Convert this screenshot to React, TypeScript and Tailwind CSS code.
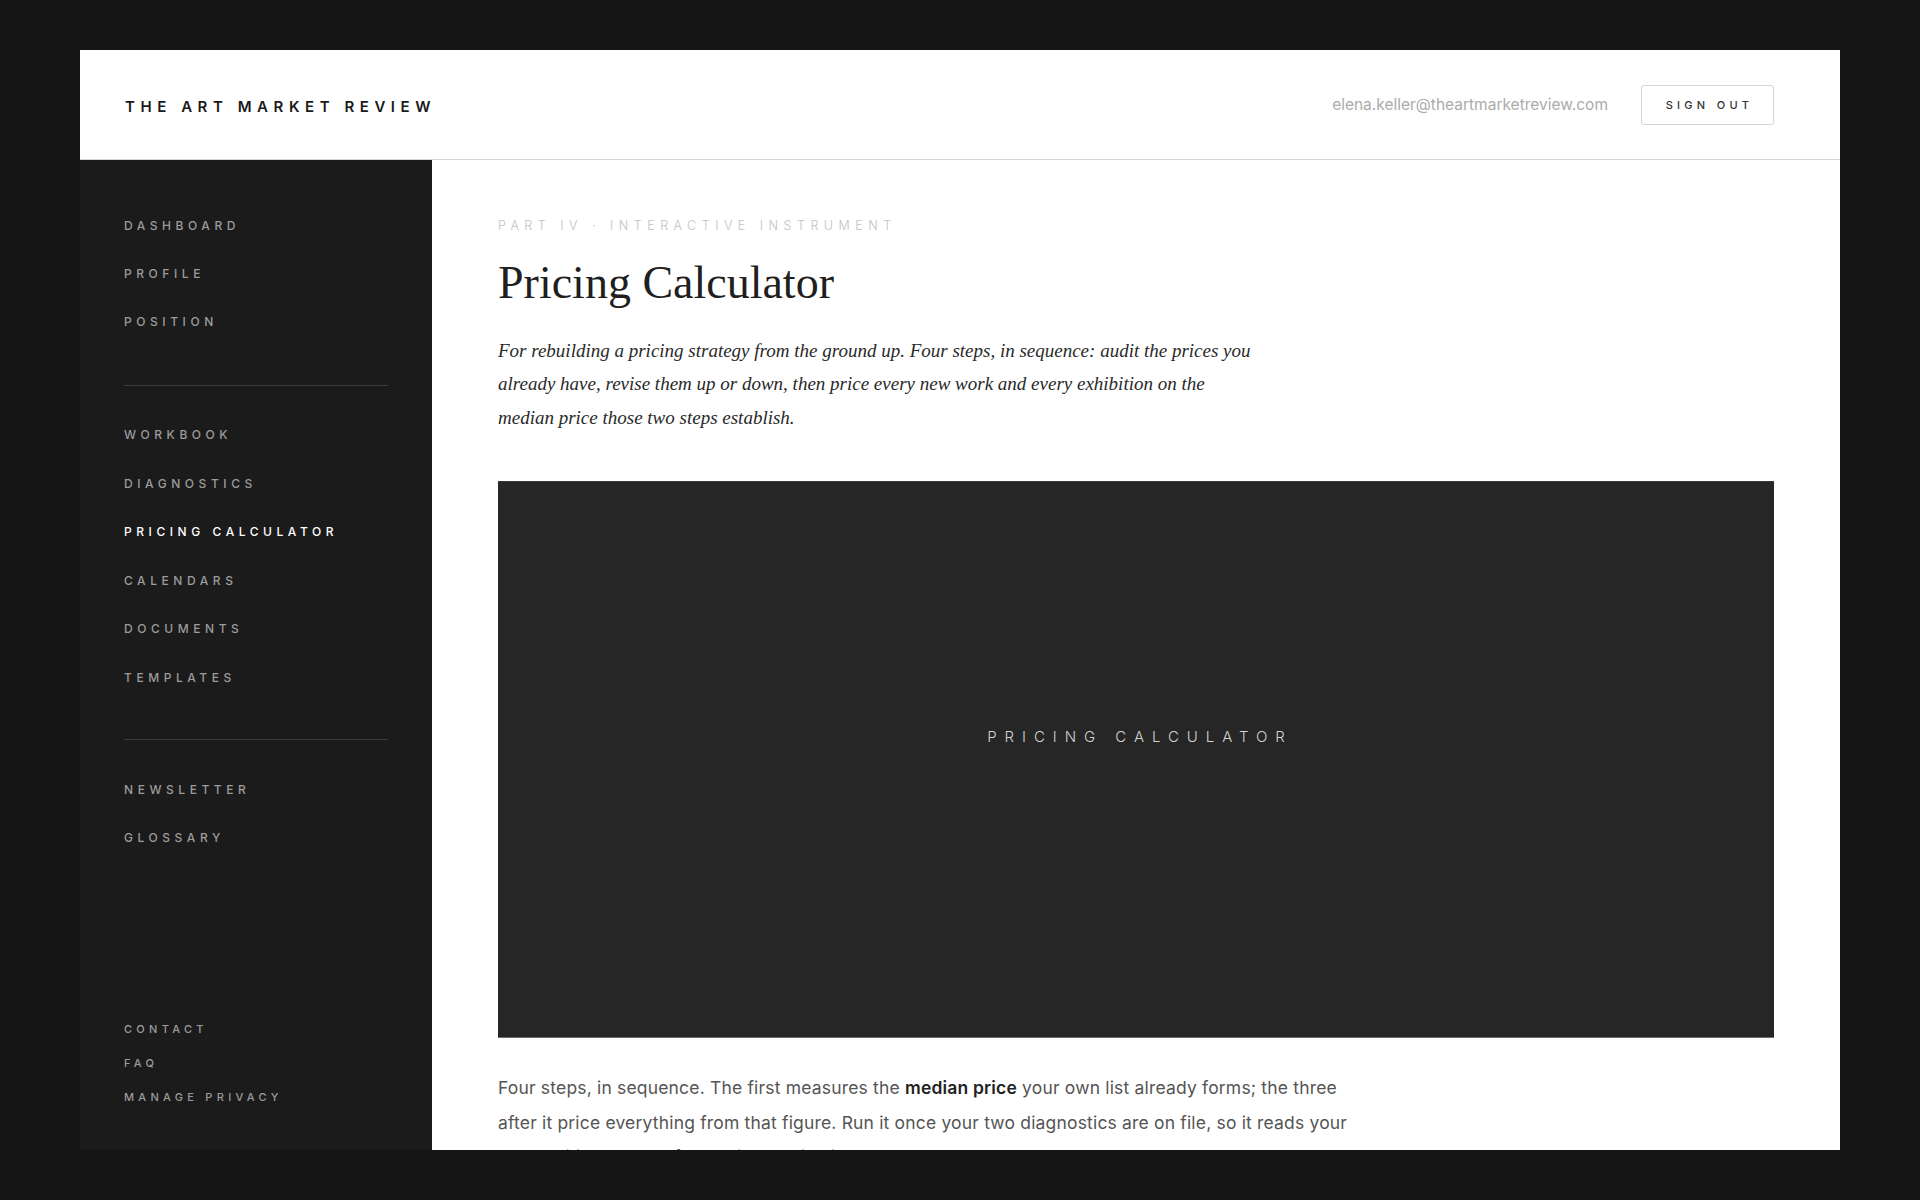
import { useState } from "react";

const primaryNav = ["Dashboard", "Profile", "Position"];
const toolNav = [
  "Workbook",
  "Diagnostics",
  "Pricing Calculator",
  "Calendars",
  "Documents",
  "Templates",
];
const extraNav = ["Newsletter", "Glossary"];
const footerNav = ["Contact", "FAQ", "Manage Privacy"];

const sans = "font-['Inter','Noto_Sans',sans-serif]";

const NavItem = ({
  label,
  active,
  onClick,
  tall,
}: {
  label: string;
  active: boolean;
  onClick: () => void;
  tall?: boolean;
}) => (
  <button
    onClick={onClick}
    className={`${tall ? "h-[48.5px]" : "h-12"} flex items-center text-left uppercase text-[12px] font-medium tracking-[0.38em] ${
      active ? "text-white" : "text-[#9c9c9c] hover:text-[#d0d0d0]"
    }`}
  >
    {label}
  </button>
);

const App = () => {
  const [active, setActive] = useState("Pricing Calculator");

  return (
    <div className={`min-h-screen bg-[#151515] px-[80px] py-[50px] ${sans}`}>
      <div className="h-[1100px] bg-white flex flex-col overflow-hidden">
        {/* Top bar */}
        <header className="h-[110px] shrink-0 border-b border-[#d6d6d6] flex items-center justify-between pl-[45px] pr-[66px]">
          <div className="text-[15px] font-semibold tracking-[0.37em] text-[#1a1a1a] uppercase pt-[5px]">
            The Art Market Review
          </div>
          <div className="flex items-center gap-[33px] pt-[1px]">
            <span className="text-[15.5px] text-[#ababab]">
              elena.keller@theartmarketreview.com
            </span>
            <button className="w-[133px] h-[40px] border border-[#d4d4d4] rounded-[3px] flex items-center justify-center pl-[4px] text-[11px] font-medium tracking-[0.39em] text-[#333]">
              SIGN OUT
            </button>
          </div>
        </header>

        <div className="flex flex-1 min-h-0">
          {/* Sidebar */}
          <aside className="w-[352px] shrink-0 bg-[#1b1b1b] flex flex-col justify-between pt-[42px] pb-[36px] px-[44px]">
            <nav className="flex flex-col">
              {primaryNav.map((n) => (
                <NavItem
                  key={n}
                  label={n}
                  active={active === n}
                  onClick={() => setActive(n)}
                />
              ))}
              <div className="mt-[39px] h-px bg-[#3d3d3d]" />
              <div className="mt-[25px] flex flex-col">
                {toolNav.map((n) => (
                  <NavItem
                    key={n}
                    label={n}
                    tall
                    active={active === n}
                    onClick={() => setActive(n)}
                  />
                ))}
              </div>
              <div className="mt-[37px] h-px bg-[#3d3d3d]" />
              <div className="mt-[26px] flex flex-col">
                {extraNav.map((n) => (
                  <NavItem
                    key={n}
                    label={n}
                    active={active === n}
                    onClick={() => setActive(n)}
                  />
                ))}
              </div>
            </nav>
            <div className="flex flex-col">
              {footerNav.map((n) => (
                <a
                  key={n}
                  href="#"
                  className="h-[34px] flex items-center uppercase text-[11px] font-medium tracking-[0.39em] text-[#9c9c9c]"
                >
                  {n}
                </a>
              ))}
            </div>
          </aside>

          {/* Main */}
          <main className="flex-1 min-w-0 px-[66px] pt-[58px] overflow-hidden">
            <p className="h-4 leading-4 text-[12.5px] font-light tracking-[0.44em] text-[#c2c2c2] uppercase">
              Part IV · Interactive Instrument
            </p>
            <h1 className="mt-[24px] font-['Liberation_Serif','Times_New_Roman',serif] text-[46px] leading-[1.1] text-[#1f1f1f]">
              Pricing Calculator
            </h1>
            <p className="mt-[25px] max-w-[760px] font-['Liberation_Serif','Times_New_Roman',serif] italic text-[19px] leading-[33.6px] text-[#2a2a2a]">
              For rebuilding a pricing strategy from the ground up. Four steps,
              in sequence: audit the prices you already have, revise them up or
              down, then price every new work and every exhibition on the
              median price those two steps establish.
            </p>

            <div className="mt-[47px] h-[557px] bg-[#262626] border-t border-b border-t-[#3a3a3a] border-b-[#6a6a6a] flex items-center justify-center pb-[45px]">
              <span className="text-[15px] font-light tracking-[0.53em] text-[#d2d2d2] uppercase pl-[8px]">
                Pricing Calculator
              </span>
            </div>

            <p className="mt-[33px] max-w-[872px] text-[17.5px] tracking-[0.01em] leading-[34.5px] text-[#555]">
              Four steps, in sequence. The first measures the{" "}
              <strong className="font-semibold text-[#222]">median price</strong>{" "}
              your own list already forms; the three after it price everything
              from that figure. Run it once your two diagnostics are on file, so
              it reads your real position back before a single price is set.
            </p>
          </main>
        </div>
      </div>
    </div>
  );
};

export default App;
